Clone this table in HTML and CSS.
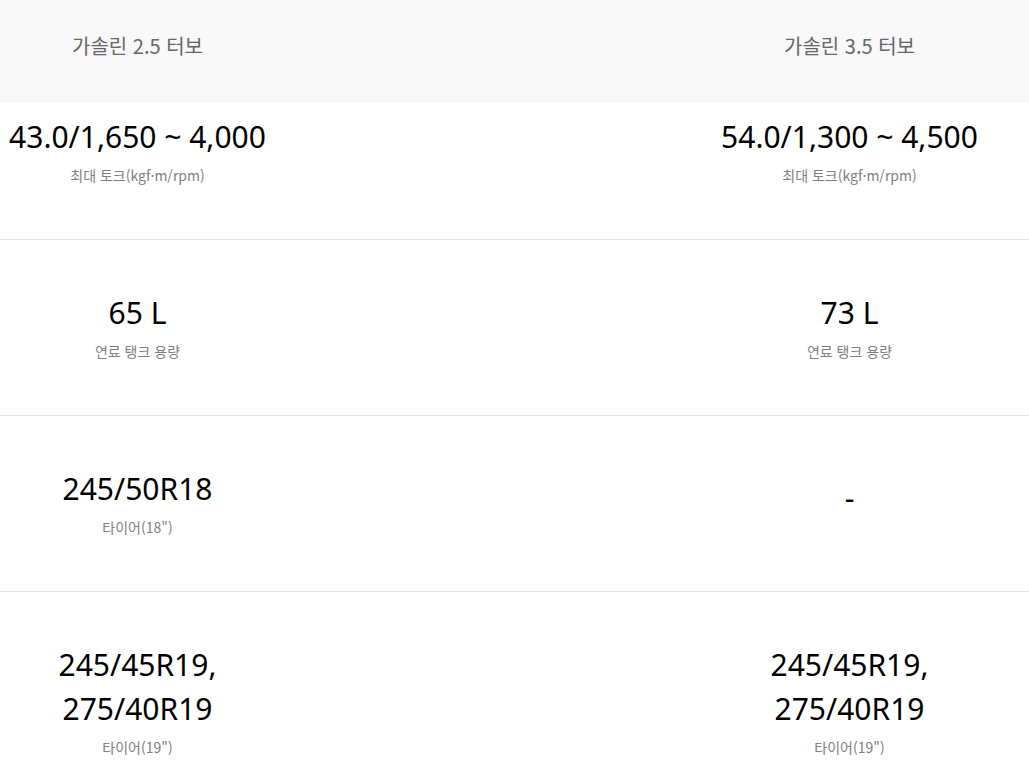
FILE: index.html
```html
<!DOCTYPE html>
<html lang="ko">
<head>
<meta charset="utf-8">
<title>제원 비교</title>
<link rel="stylesheet" href="styles.css">
</head>
<body>
<div class="spec">
  <div class="spec-head">
    <div class="cell head-title">가솔린 2.5 터보</div>
    <div class="cell gap"></div>
    <div class="cell head-title">가솔린 3.5 터보</div>
  </div>
  <div class="spec-row first">
    <div class="cell">
      <div class="value">43.0/1,650 ~ 4,000</div>
      <div class="label">최대 토크(kgf·m/rpm)</div>
    </div>
    <div class="cell gap"></div>
    <div class="cell">
      <div class="value">54.0/1,300 ~ 4,500</div>
      <div class="label">최대 토크(kgf·m/rpm)</div>
    </div>
  </div>
  <div class="spec-row">
    <div class="cell">
      <div class="value">65 L</div>
      <div class="label">연료 탱크 용량</div>
    </div>
    <div class="cell gap"></div>
    <div class="cell">
      <div class="value">73 L</div>
      <div class="label">연료 탱크 용량</div>
    </div>
  </div>
  <div class="spec-row">
    <div class="cell">
      <div class="value">245/50R18</div>
      <div class="label">타이어(18")</div>
    </div>
    <div class="cell gap"></div>
    <div class="cell">
      <div class="value empty">-</div>
    </div>
  </div>
  <div class="spec-row">
    <div class="cell">
      <div class="value">245/45R19, 275/40R19</div>
      <div class="label">타이어(19")</div>
    </div>
    <div class="cell gap"></div>
    <div class="cell">
      <div class="value">245/45R19, 275/40R19</div>
      <div class="label">타이어(19")</div>
    </div>
  </div>
</div>
</body>
</html>
```
FILE: styles.css
```css
html, body {
  margin: 0;
  padding: 0;
  background: #ffffff;
}

body {
  font-family: "Noto Sans", "Noto Sans CJK KR", sans-serif;
  color: #000;
}

.spec-head,
.spec-row {
  display: grid;
  grid-template-columns: 275px 437px 275px 1fr;
}

.spec-head {
  background: #f8f8f8;
  height: 103px;
  box-sizing: border-box;
  padding-top: 30px;
}

.head-title {
  font-family: "Noto Sans CJK KR", sans-serif;
  font-size: 20px;
  line-height: 32px;
  color: #666;
  text-align: center;
}

.spec-row {
  padding: 51px 0 53px;
  border-bottom: 1px solid #e5e5e5;
}

.spec-row.first {
  padding-top: 12px;
}

.cell {
  text-align: center;
}

.value {
  font-family: "Noto Sans", "Noto Sans CJK KR", sans-serif;
  font-size: 30px;
  line-height: 44px;
  color: #000;
}

.value.empty {
  padding-top: 9px;
}

.label {
  font-family: "Noto Sans CJK KR", sans-serif;
  font-size: 14px;
  line-height: 22px;
  margin-top: 5px;
  color: #808080;
}
```
